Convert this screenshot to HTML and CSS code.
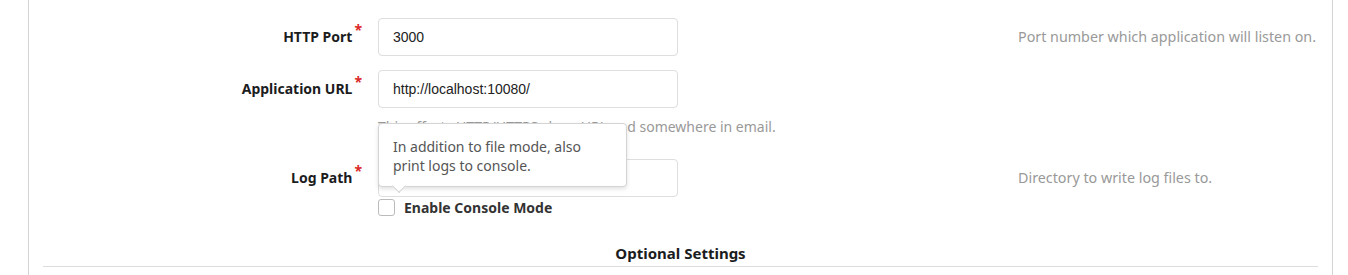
FILE: index.html
```html
<!DOCTYPE html>
<html lang="en">
<head>
    <meta charset="UTF-8">
    <title>Install</title>
    <link rel="stylesheet" href="styles.css">
</head>
<body>
<div class="segment">
    <div class="field">
        <label class="required" for="http-port">HTTP Port</label>
        <div class="control">
            <input id="http-port" type="text" value="3000">
        </div>
        <span class="help">Port number which application will listen on.</span>
    </div>
    <div class="field">
        <label class="required" for="app-url">Application URL</label>
        <div class="control">
            <input id="app-url" type="text" value="http://localhost:10080/">
            <span class="hint">This affects HTTP/HTTPS clone URL and somewhere in email.</span>
        </div>
        <span class="help"></span>
    </div>
    <div class="field">
        <label class="required" for="log-path">Log Path</label>
        <div class="control">
            <input id="log-path" type="text" value="">
            <div class="checkbox">
                <span class="box"></span>
                <span class="box-label">Enable Console Mode</span>
            </div>
            <div class="popup">In addition to file mode, also print logs to console.</div>
        </div>
        <span class="help">Directory to write log files to.</span>
    </div>
    <h4 class="divider">Optional Settings</h4>
</div>
</body>
</html>
```

FILE: styles.css
```css
body {
  margin: 0;
  background: white;
  font-family: "Noto Sans", "Open Sans", sans-serif;
  font-size: 14px;
  color: #222;
}

.segment {
  margin: 0 15px 0 28px;
  padding: 18px 14px 0;
  border-left: 1px solid #d4d4d5;
  border-right: 1px solid #d4d4d5;
  min-height: 275px;
  box-sizing: border-box;
}

.field {
  display: grid;
  grid-template-columns: 319px 300px 1fr;
  column-gap: 16px;
  align-items: start;
  margin-bottom: 14px;
}

.field label {
  text-align: right;
  font-weight: bold;
  line-height: 38px;
  color: #1b1c1d;
}

.field label.required::after {
  content: "*";
  color: #db2828;
  margin-left: 2px;
  vertical-align: top;
  position: relative;
  top: -7px;
}

.control {
  position: relative;
}

.control input {
  display: block;
  box-sizing: border-box;
  width: 300px;
  height: 38px;
  padding: 0 14px;
  border: 1px solid #dedede;
  border-radius: 4px;
  font-family: "Liberation Sans", Arial, sans-serif;
  font-size: 14px;
  color: #222;
  outline: none;
}

.hint {
  display: block;
  margin: 9px 0 8px;
  color: #999;
  white-space: nowrap;
  line-height: 20px;
}

.help {
  color: #999;
  line-height: 38px;
  padding-left: 324px;
  white-space: nowrap;
  font-size: 14.3px;
}

.checkbox {
  display: flex;
  align-items: center;
  gap: 9px;
  margin-top: 2px;
  height: 17px;
}

.box {
  width: 15px;
  height: 15px;
  border: 1px solid #bbb;
  border-radius: 3px;
}

.box-label {
  font-weight: bold;
  color: #333;
}

.popup {
  position: absolute;
  left: 0;
  top: -36px;
  width: 249px;
  box-sizing: border-box;
  padding: 13px 14px 11px;
  background: white;
  border: 1px solid #d4d4d5;
  border-radius: 4px;
  box-shadow: 0 2px 4px rgba(0, 0, 0, 0.12);
  line-height: 19px;
  color: #555;
}

.popup::after {
  content: "";
  position: absolute;
  left: 15px;
  bottom: -5px;
  width: 9px;
  height: 9px;
  background: white;
  transform: rotate(45deg);
  border-right: 1px solid #d4d4d5;
  border-bottom: 1px solid #d4d4d5;
}

.divider {
  margin: 27px 0 0;
  padding-bottom: 3px;
  text-align: center;
  font-size: 15px;
  border-bottom: 1px solid #ddd;
  color: #1b1c1d;
}
```
